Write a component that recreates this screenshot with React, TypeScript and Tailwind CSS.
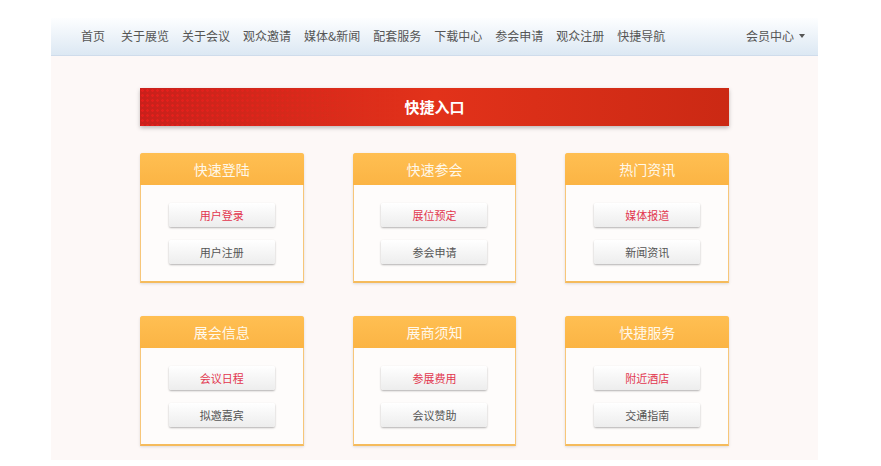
const navItems = ["首页", "关于展览", "关于会议", "观众邀请", "媒体&新闻", "配套服务", "下载中心", "参会申请", "观众注册", "快捷导航"]

const cards = [
  { title: "快速登陆", links: ["用户登录", "用户注册"] },
  { title: "快速参会", links: ["展位预定", "参会申请"] },
  { title: "热门资讯", links: ["媒体报道", "新闻资讯"] },
  { title: "展会信息", links: ["会议日程", "拟邀嘉宾"] },
  { title: "展商须知", links: ["参展费用", "会议赞助"] },
  { title: "快捷服务", links: ["附近酒店", "交通指南"] },
]

function Card({ title, links }: { title: string; links: string[] }) {
  return (
    <div className="flex flex-col h-[130px] rounded-t-[3px] border border-[#f7c679] border-b-2 border-b-[#f5bb5c] bg-[#fefcfb] shadow-[0_1px_3px_rgba(0,0,0,0.12)]">
      {/* header */}
      <div className="h-[32px] -mx-px -mt-px flex items-center justify-center rounded-t-[3px] bg-gradient-to-b from-[#ffbf52] to-[#fbb444] text-[14px] text-[#fff8ea]">
        {title}
      </div>
      <div className="flex flex-col items-center gap-[13px] pt-[18px]">
        {links.map((l, i) => (
          <div
            key={l}
            className={`w-[106px] h-[24px] flex items-center justify-center rounded-[2px] bg-gradient-to-b from-[#ffffff] to-[#ededed] shadow-[0_1px_2px_rgba(0,0,0,0.3)] text-[11px] ${
              i === 0 ? "text-[#e2364e]" : "text-[#555]"
            }`}
          >
            {l}
          </div>
        ))}
      </div>
    </div>
  )
}

export default function App() {
  return (
    <div className="w-[881px] h-[466px] bg-white overflow-hidden font-['Noto_Sans_CJK_SC','Noto_Sans',sans-serif]">
      <div className="ml-[51px] w-[767px] pt-[18px]">
        {/* Navbar */}
        <nav className="h-[38px] flex items-center justify-between pl-[30px] pr-[13px] bg-gradient-to-b from-[#fdfeff] to-[#dce8f3] border-b border-[#cfdceb] text-[12px] text-[#555]">
          <div className="flex items-center gap-[13px] pb-[2px]">
            {navItems.map((n, i) => (
              <span key={n} className={i === 0 ? "mr-[3px]" : ""}>
                {n}
              </span>
            ))}
          </div>
          <div className="flex items-center gap-[5px] pb-[2px]">
            <span>会员中心</span>
            <span className="w-0 h-0 border-x-[3.5px] border-x-transparent border-t-[4px] border-t-[#555]" />
          </div>
        </nav>

        {/* Content */}
        <main className="bg-[#fdf8f7] h-[404px] pt-[32px] px-[89px]">
          <div className="relative h-[38px] flex items-center justify-center bg-gradient-to-r from-[#c9201b] via-[#e2321a] to-[#cb2914] shadow-[0_2px_4px_rgba(0,0,0,0.25)] overflow-hidden">
            <div className="absolute inset-y-0 left-0 w-[260px] bg-[radial-gradient(circle,rgba(255,30,30,0.55)_1px,transparent_1.6px)] bg-[length:5px_5px] [mask-image:linear-gradient(to_right,black,transparent)]" />
            <span className="relative text-white text-[15px] font-bold">快捷入口</span>
          </div>

          <div className="mt-[27px] grid grid-cols-3 gap-x-[49px] gap-y-[33px]">
            {cards.map((c) => (
              <Card key={c.title} title={c.title} links={c.links} />
            ))}
          </div>
        </main>
      </div>
    </div>
  )
}
